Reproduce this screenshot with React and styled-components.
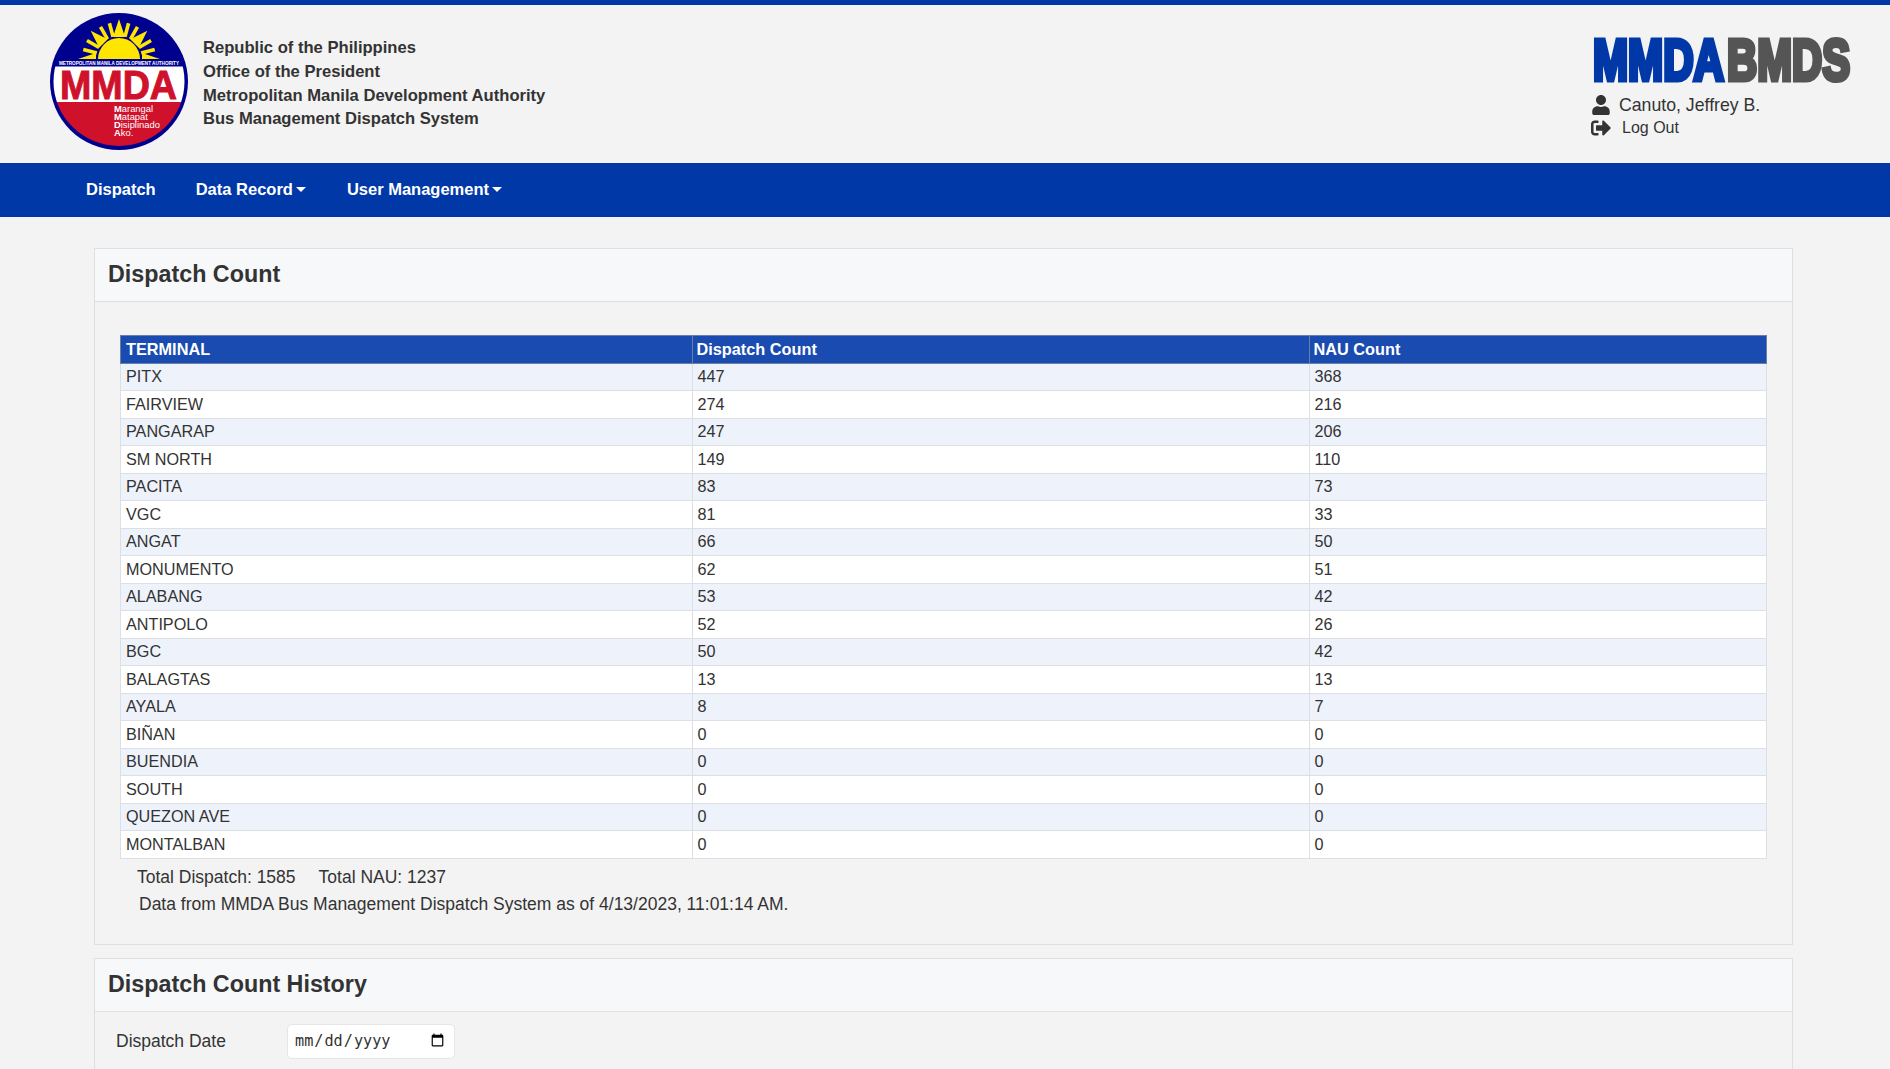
import React from 'react'
import styled, { createGlobalStyle } from 'styled-components'
import { FaUser, FaSignOutAlt } from 'react-icons/fa'

const GlobalStyle = createGlobalStyle`
html, body {
  margin: 0;
  padding: 0;
  background: #f3f3f3;
  font-family: "Liberation Sans", Arial, sans-serif;
  font-size: 16px;
  color: #333;
}
* { box-sizing: border-box; }
`

const Page = styled.div`
height: 1069px;
overflow: hidden;
border-top: 5px solid #0038a8;
`

const Header = styled.header`
height: 158px;
display: flex;
justify-content: space-between;
padding: 8px 38px 0 50px;
`

const Brand = styled.div`
display: flex;
`

const BrandText = styled.div`
margin: 23px 0 0 15px;
font-size: 16.6px;
font-weight: bold;
line-height: 23.8px;
color: #333;
`

const UserBox = styled.div`
width: 261px;
padding-top: 24px;
> svg:first-child { display: block; overflow: visible; margin-bottom: 10px; }
`

const UserRow = styled.div`
display: flex;
align-items: center;
height: ${p => p.$h}px;
font-size: ${p => p.$size}px;
gap: ${p => p.$gap}px;
svg { flex: none; color: #333; }
`

const Nav = styled.nav`
height: 54px;
padding: 0 0 2px 86px;
background: #0038a8;
display: flex;
align-items: center;
gap: 40px;
`

const NavItem = styled.a`
color: #fff;
font-size: 16.5px;
font-weight: bold;
display: flex;
align-items: center;
`

const Caret = styled.span`
margin: 0 1px 0 3px;
border-top: 5px solid #fff;
border-left: 5px solid transparent;
border-right: 5px solid transparent;
`

const Main = styled.main`
padding: 31px 97px 0 94px;
display: flex;
flex-direction: column;
gap: 13px;
`

const Card = styled.section`
border: 1px solid #dfdfdf;
`

const CardTitle = styled.h2`
margin: 0;
height: 53px;
padding-left: 13px;
background: #f7f8fa;
border-bottom: 1px solid #dfdfdf;
font-size: 23.3px;
font-weight: bold;
line-height: 50px;
color: #333;
`

const CardBody = styled.div`
padding: 33px 25px 26px 25px;
`

const Table = styled.table`
width: 1647px;
border-collapse: collapse;
table-layout: fixed;
`

const Th = styled.th`
height: 27.5px;
padding: 0 0 0 ${p => p.$pad || 5}px;
background: #1a4bb0;
border: 1px solid #6d7f9f;
color: #fff;
font-size: 16.3px;
font-weight: bold;
text-align: left;
width: ${p => p.$w};
`

const Row = styled.tr`
height: 27.5px;
background: ${p => (p.$odd ? '#eef2fb' : '#fff')};
`

const Td = styled.td`
padding: 0 0 0 5px;
border: 1px solid #dcdfe4;
font-size: 16.2px;
`

const Totals = styled.div`
margin-top: 5px;
padding-left: 17px;
font-size: 17.5px;
line-height: 27px;
span { margin-right: 23px; }
`

const Note = styled.div`
padding-left: 19px;
font-size: 17.5px;
line-height: 27px;
`

const FilterRow = styled.div`
display: flex;
align-items: center;
padding: 12px 0 60px 21px;
`

const FilterLabel = styled.label`
width: 171px;
font-size: 17.5px;
`

const DateField = styled.input`
width: 168px;
height: 35px;
padding: 0 7px 0 6px;
background: #fff;
border: 1px solid #e6e6e6;
border-radius: 5px;
font-family: "DejaVu Sans Mono", monospace;
font-size: 15.2px;
color: #333;
`

const rows = [
  ['PITX', 447, 368],
  ['FAIRVIEW', 274, 216],
  ['PANGARAP', 247, 206],
  ['SM NORTH', 149, 110],
  ['PACITA', 83, 73],
  ['VGC', 81, 33],
  ['ANGAT', 66, 50],
  ['MONUMENTO', 62, 51],
  ['ALABANG', 53, 42],
  ['ANTIPOLO', 52, 26],
  ['BGC', 50, 42],
  ['BALAGTAS', 13, 13],
  ['AYALA', 8, 7],
  ['BIÑAN', 0, 0],
  ['BUENDIA', 0, 0],
  ['SOUTH', 0, 0],
  ['QUEZON AVE', 0, 0],
  ['MONTALBAN', 0, 0],
]

// sun rays fan out from the middle of the flat edge
const thinRays = [-75, -60, -30, -15, 15, 30, 60, 75]
const bigRays = [-45, 0, 45]

const Logo = () => (
  <svg width="138" height="137" viewBox="0 0 138 137">
    <defs>
      <clipPath id="inner">
        <ellipse cx="69" cy="68.5" rx="65.5" ry="64.5" />
      </clipPath>
    </defs>
    <ellipse cx="69" cy="68.5" rx="69" ry="68.5" fill="#00008f" />
    <g clipPath="url(#inner)">
      <rect x="0" y="53.5" width="138" height="36" fill="#fff" />
      <rect x="0" y="89" width="138" height="50" fill="#d0112b" />
    </g>
    <g fill="#ffe600">
      <path d="M48 46 A21 21 0 0 1 90 46 Z" />
      <path d="M28 46 L46 40 L46 46 Z" />
      <path d="M110 46 L92 40 L92 46 Z" />
      {thinRays.map(a => (
        <rect key={a} x="67.2" y="9" width="3.6" height="14" transform={`rotate(${a} 69 46)`} />
      ))}
      {bigRays.map(a => (
        <path key={a} d="M69 6 L75 24 L63 24 Z" transform={`rotate(${a} 69 46)`} />
      ))}
    </g>
    <text x="9" y="52" textLength="120" lengthAdjust="spacingAndGlyphs" fontFamily="Liberation Sans" fontWeight="bold" fontSize="5" fill="#fff">METROPOLITAN MANILA DEVELOPMENT AUTHORITY</text>
    <text x="10" y="86" textLength="117" lengthAdjust="spacingAndGlyphs" fontFamily="Liberation Sans" fontWeight="bold" fontSize="40" fill="#d0112b" stroke="#d0112b" strokeWidth="1">MMDA</text>
    <g fontFamily="Liberation Sans" fontSize="9.4" fill="#fff">
      <text x="64" y="98.5"><tspan fontWeight="bold">M</tspan>arangal</text>
      <text x="64" y="107"><tspan fontWeight="bold">M</tspan>atapat</text>
      <text x="64" y="115"><tspan fontWeight="bold">D</tspan>isiplinado</text>
      <text x="64" y="123"><tspan fontWeight="bold">A</tspan>ko.</text>
    </g>
  </svg>
)

const BmdsLogo = () => (
  <svg width="261" height="46" viewBox="0 0 261 46">
    <g fontFamily="Liberation Sans" fontWeight="bold" fontSize="57" strokeWidth="5" strokeLinejoin="miter">
      <text x="2" y="43" textLength="131" lengthAdjust="spacingAndGlyphs" fill="#0038a8" stroke="#0038a8">MMDA</text>
      <text x="136" y="43" textLength="123" lengthAdjust="spacingAndGlyphs" fill="#555" stroke="#555">BMDS</text>
    </g>
  </svg>
)

const App = () => (
  <Page>
    <GlobalStyle />
    <Header>
      <Brand>
        <Logo />
        <BrandText>
          <div>Republic of the Philippines</div>
          <div>Office of the President</div>
          <div>Metropolitan Manila Development Authority</div>
          <div>Bus Management Dispatch System</div>
        </BrandText>
      </Brand>
      <UserBox>
        <BmdsLogo />
        <UserRow $h={24} $size={17.7} $gap={8}>
          <FaUser size={20} />
          Canuto, Jeffrey B.
        </UserRow>
        <UserRow $h={22} $size={16} $gap={11}>
          <FaSignOutAlt size={20} />
          Log Out
        </UserRow>
      </UserBox>
    </Header>
    <Nav>
      <NavItem>Dispatch</NavItem>
      <NavItem>Data Record<Caret /></NavItem>
      <NavItem>User Management<Caret /></NavItem>
    </Nav>
    <Main>
      <Card>
        <CardTitle>Dispatch Count</CardTitle>
        <CardBody>
          <Table>
            <thead>
              <tr>
                <Th $w="571.5px">TERMINAL</Th>
                <Th $w="617px" $pad={4}>Dispatch Count</Th>
                <Th $pad={4}>NAU Count</Th>
              </tr>
            </thead>
            <tbody>
              {rows.map((r, i) => (
                <Row key={r[0]} $odd={i % 2 === 0}>
                  <Td>{r[0]}</Td>
                  <Td>{r[1]}</Td>
                  <Td>{r[2]}</Td>
                </Row>
              ))}
            </tbody>
          </Table>
          <Totals><span>Total Dispatch: 1585</span>Total NAU: 1237</Totals>
          <Note>Data from MMDA Bus Management Dispatch System as of 4/13/2023, 11:01:14 AM.</Note>
        </CardBody>
      </Card>
      <Card>
        <CardTitle>Dispatch Count History</CardTitle>
        <FilterRow>
          <FilterLabel>Dispatch Date</FilterLabel>
          <DateField type="date" />
        </FilterRow>
      </Card>
    </Main>
  </Page>
)

export default App
